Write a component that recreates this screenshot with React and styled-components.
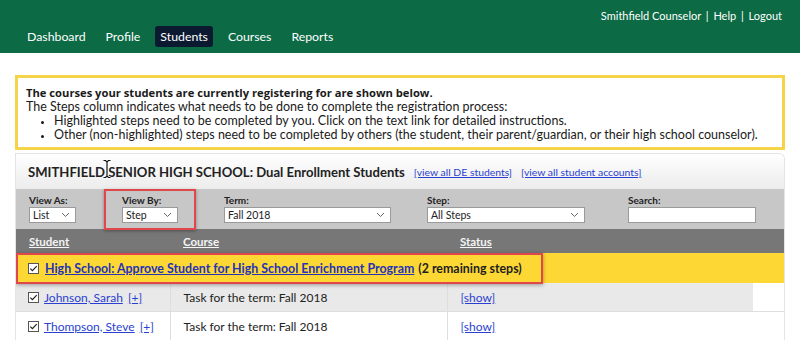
import React from "react"
import styled, { createGlobalStyle } from "styled-components"

const GlobalStyle = createGlobalStyle`
  body {
    margin: 0;
    background: #ffffff;
    font-family: Lato, "Open Sans", sans-serif;
    color: #222;
  }
`

const navItems = ["Dashboard", "Profile", "Students", "Courses", "Reports"]

const filters = [
  { label: "View As:", value: "List", width: 47 },
  { label: "View By:", value: "Step", width: 56, marked: true },
  { label: "Term:", value: "Fall 2018", width: 167 },
  { label: "Step:", value: "All Steps", width: 158 },
]

const students = [
  { name: "Johnson, Sarah", course: "Task for the term: Fall 2018", shaded: true },
  { name: "Thompson, Steve", course: "Task for the term: Fall 2018" },
]

function CheckIcon() {
  return (
    <svg width="11" height="11" viewBox="0 0 11 11">
      <rect x="0.5" y="0.5" width="10" height="10" fill="#fff" stroke="#555" />
      <path d="M2.3 5.6 L4.4 7.7 L8.7 3.1" fill="none" stroke="#222" strokeWidth="1.2" />
    </svg>
  )
}

function Chevron() {
  return (
    <svg width="9" height="6" viewBox="0 0 9 6">
      <path d="M1 1 L4.5 4.5 L8 1" fill="none" stroke="#666" strokeWidth="1" />
    </svg>
  )
}

export default function App() {
  return (
    <>
      <GlobalStyle />
      <Header>
        <UserLinks>
          Smithfield Counselor <Sep>|</Sep> Help <Sep>|</Sep> Logout
        </UserLinks>
        <Nav>
          {navItems.map((item) => (
            <NavItem key={item} active={item === "Students"}>
              {item}
            </NavItem>
          ))}
        </Nav>
      </Header>

      <Main>
        <Notice>
          <NoticeLead>The courses your students are currently registering for are shown below.</NoticeLead>
          <div>The Steps column indicates what needs to be done to complete the registration process:</div>
          <NoticeList>
            <li>Highlighted steps need to be completed by you. Click on the text link for detailed instructions.</li>
            <li>
              Other (non-highlighted) steps need to be completed by others (the student, their parent/guardian, or their
              high school counselor).
            </li>
          </NoticeList>
        </Notice>

        <Panel>
          <PanelTitle>
            <TitleText>
              SMITHFIELD SENIOR HIGH SCHOOL: Dual Enrollment Students
              <Cursor width="10" height="20" viewBox="0 0 10 20">
                <path d="M1.5 1.5 H3.5 L5 3 L6.5 1.5 H8.5 M5 3 V17 M1.5 18.5 H3.5 L5 17 L6.5 18.5 H8.5" fill="none" stroke="#fff" strokeWidth="2.6" />
                <path d="M1.5 1.5 H3.5 L5 3 L6.5 1.5 H8.5 M5 3 V17 M1.5 18.5 H3.5 L5 17 L6.5 18.5 H8.5" fill="none" stroke="#111" strokeWidth="1.2" />
              </Cursor>
            </TitleText>
            <SmallLink href="#">[view all DE students]</SmallLink>
            <SmallLink href="#">[view all student accounts]</SmallLink>
          </PanelTitle>

          <FilterBar>
            {filters.map((f) => (
              <Field key={f.label} marked={f.marked}>
                <FieldLabel>{f.label}</FieldLabel>
                <Select width={f.width}>
                  <span>{f.value}</span>
                  <Chevron />
                </Select>
              </Field>
            ))}
            <Field>
              <FieldLabel>Search:</FieldLabel>
              <SearchInput />
            </Field>
          </FilterBar>

          <Table>
            <colgroup>
              <col style={{ width: 154 }} />
              <col style={{ width: 277 }} />
              <col style={{ width: 306 }} />
              <col />
            </colgroup>
            <thead>
              <tr>
                <Th>Student</Th>
                <Th>Course</Th>
                <Th>Status</Th>
                <Th />
              </tr>
            </thead>
            <tbody>
              <StepRow>
                <StepCell colSpan={4}>
                  <StepMark>
                    <CheckIcon />
                    <StepLink href="#">High School: Approve Student for High School Enrichment Program</StepLink>
                    <span>(2 remaining steps)</span>
                  </StepMark>
                </StepCell>
              </StepRow>
              {students.map((s) => (
                <tr key={s.name}>
                  <Td shaded={s.shaded}>
                    <Check>
                      <CheckIcon />
                      <RowLink href="#">{s.name}</RowLink>
                      <RowLink href="#">[+]</RowLink>
                    </Check>
                  </Td>
                  <Td shaded={s.shaded}>{s.course}</Td>
                  <Td shaded={s.shaded}>
                    <RowLink href="#">[show]</RowLink>
                  </Td>
                  <Td last />
                </tr>
              ))}
            </tbody>
          </Table>
        </Panel>
      </Main>
    </>
  )
}

const Header = styled.header`
  background: #0c6a44;
  height: 53px;
  padding: 0 18px 0 22px;
  display: flex;
  flex-direction: column;
  color: #fff;
`

const UserLinks = styled.div`
  align-self: flex-end;
  font-size: 11px;
  margin-top: 7px;
  height: 17px;
  line-height: 17px;
`

const Sep = styled.span`
  margin: 0 2px;
`

const Nav = styled.nav`
  display: flex;
  gap: 10px;
  margin-top: 2px;
`

const NavItem = styled.a`
  font-size: 12.3px;
  line-height: 21px;
  padding: 0 5px;
  border-radius: 3px;
  color: #fff;
  background: ${(p) => (p.active ? "#0b1a30" : "transparent")};
`

const Main = styled.main`
  margin: 22px 15px 0;
`

const Notice = styled.section`
  border: 3px solid #f5d44a;
  padding: 8px 8px 5px;
  font-size: 12.5px;
  line-height: 14px;
  color: #1a1a1a;
`

const NoticeLead = styled.div`
  font-family: "Open Sans", sans-serif;
  font-weight: 700;
  font-size: 11.2px;
`

const NoticeList = styled.ul`
  margin: 0;
  padding-left: 28px;
  li::marker {
    font-size: 10px;
  }
`

const Panel = styled.section`
  margin-top: 3px;
  border-top-right-radius: 6px;
  overflow: hidden;
  border: 1px solid #e4e4e4;
  border-bottom: none;
`

const PanelTitle = styled.div`
  height: 35px;
  display: flex;
  align-items: center;
  gap: 9px;
  padding-left: 12px;
  background: linear-gradient(#ffffff, #ececec);
`

const TitleText = styled.h2`
  position: relative;
  margin: 0;
  font-size: 13.1px;
  font-weight: 700;
  color: #222;
`

const Cursor = styled.svg`
  position: absolute;
  left: 74px;
  top: -5px;
`

const SmallLink = styled.a`
  font-size: 10.4px;
  color: #2b3fd0;
  text-decoration: underline;
`

const FilterBar = styled.div`
  height: 40px;
  background: #c7c7c7;
  display: flex;
  align-items: flex-start;
  padding: 6px 0 0 13px;
  box-sizing: border-box;
  & > *:nth-child(1) { margin-right: 46px; }
  & > *:nth-child(2) { margin-right: 46px; }
  & > *:nth-child(3) { margin-right: 36px; }
  & > *:nth-child(4) { margin-right: 43px; }
`

const Field = styled.div`
  position: relative;
  display: flex;
  flex-direction: column;
  gap: 1px;
  &::after {
    content: "";
    display: ${(p) => (p.marked ? "block" : "none")};
    position: absolute;
    left: -18px;
    right: -18px;
    top: -6px;
    bottom: -7px;
    border: 2px solid #e0474b;
    box-shadow: 0 1px 3px rgba(0, 0, 0, 0.35);
  }
`

const FieldLabel = styled.label`
  font-size: 10px;
  font-weight: 700;
  color: #222;
  line-height: 11px;
`

const Select = styled.div`
  width: ${(p) => p.width}px;
  height: 16px;
  box-sizing: border-box;
  background: #fff;
  border: 1px solid #9a9a9a;
  display: flex;
  align-items: center;
  justify-content: space-between;
  padding: 0 5px 0 3px;
  font-size: 10.5px;
  color: #222;
`

const SearchInput = styled.div`
  width: 128px;
  height: 16px;
  box-sizing: border-box;
  background: #fff;
  border: 1px solid #9a9a9a;
`

const Table = styled.table`
  width: 100%;
  border-collapse: collapse;
  table-layout: fixed;
`

const Th = styled.th`
  background: #777777;
  color: #f4f4f4;
  font-size: 11.5px;
  font-weight: 700;
  text-align: left;
  text-decoration: underline;
  height: 24px;
  padding: 0 0 0 13px;
`

const StepRow = styled.tr`
  background: #fdd835;
`

const StepCell = styled.td`
  height: 30px;
  padding: 0;
`

const StepMark = styled.div`
  position: relative;
  height: 30px;
  display: flex;
  align-items: center;
  gap: 6px;
  padding-left: 12px;
  font-size: 12.4px;
  font-weight: 700;
  color: #1e1e1e;
  &::after {
    content: "";
    position: absolute;
    left: 0;
    width: 527px;
    top: 0;
    height: 31px;
    border: 2px solid #e0474b;
    box-sizing: border-box;
    box-shadow: 0 1px 4px rgba(0, 0, 0, 0.35);
  }
`

const StepLink = styled.a`
  color: #2532b8;
  text-decoration: underline;
  margin-right: -2px;
`

const Td = styled.td`
  height: 28px;
  padding: 0 0 0 13px;
  font-size: 12px;
  color: #222;
  background: ${(p) => (p.shaded ? "#e9e9e9" : "#fff")};
  border-bottom: 1px solid #dedede;
  border-left: ${(p) => (p.last ? "none" : "1px solid #dedede")};
  &:first-child {
    border-left: none;
    padding-left: 12px;
  }
`

const Check = styled.div`
  display: flex;
  align-items: center;
  gap: 5px;
`

const RowLink = styled.a`
  color: #2b3fd0;
  text-decoration: underline;
`
